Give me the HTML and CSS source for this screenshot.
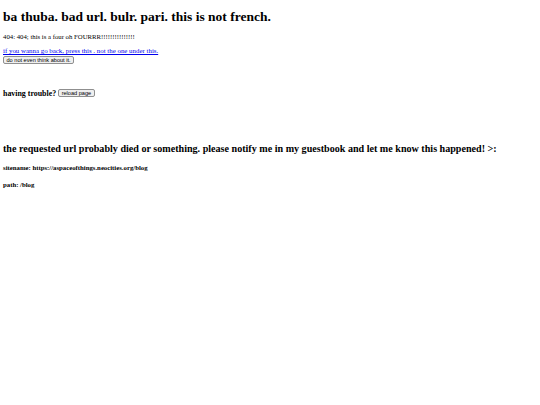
FILE: index.html
```html
<!DOCTYPE html>
<html lang="en">
  <head>
    <meta charset="UTF-8" />
    <title>404</title>
    <link rel="stylesheet" href="styles.css">
  </head>
  <body>
    <h1 class="title">ba thuba. bad url. bulr. pari. this is not french.</h1>
    <p class="note">404: 404; this is a four oh FOURRR!!!!!!!!!!!!!!!</p>
    <div class="back">
      <a href="#" class="back-link">if you wanna go back, press this . not the one under this.</a>
      <button class="btn">do not even think about it.</button>
    </div>
    <h3 class="trouble">having trouble? <button class="btn">reload page</button></h3>
    <h2 class="died">the requested url probably died or something. please notify me in my guestbook and let me know this happened! &gt;:</h2>
    <h4 class="info">sitename: https://aspaceofthings.neocities.org/blog</h4>
    <h4 class="info">path: /blog</h4>
  </body>
</html>
```

FILE: styles.css
```css
html {
  background: #fff;
}

body {
  margin: 0;
  padding: 0 3px;
  font-family: "Liberation Serif", "Times New Roman", serif;
  color: #000;
}

.title {
  font-size: 13.5px;
  line-height: 15px;
  margin: 9px 0 0;
}

.note {
  font-size: 6.75px;
  line-height: 8px;
  margin: 9px 0 0;
}

.back {
  font-size: 6.75px;
  line-height: 8px;
  margin-top: 6px;
  display: flex;
  flex-direction: column;
  align-items: flex-start;
  gap: 1px;
}

.back-link {
  font-size: 6.9px;
  color: #0000ee;
}

.btn {
  font-family: "Liberation Sans", Arial, sans-serif;
  font-size: 5.6px;
  font-weight: normal;
  line-height: 6px;
  height: 8px;
  padding: 0 2.5px;
  margin: 0;
  color: #000;
  background: #efefef;
  border: 1px solid #8f8f8f;
  border-radius: 2px;
}

.trouble {
  font-size: 7.9px;
  line-height: 9px;
  margin: 24.8px 0 0;
  display: flex;
  align-items: center;
  gap: 2px;
}

.died {
  font-size: 10.1px;
  line-height: 12px;
  margin: 45px 0 0;
}

.info {
  font-size: 6.75px;
  line-height: 8px;
  margin: 9px 0 0;
}
```
